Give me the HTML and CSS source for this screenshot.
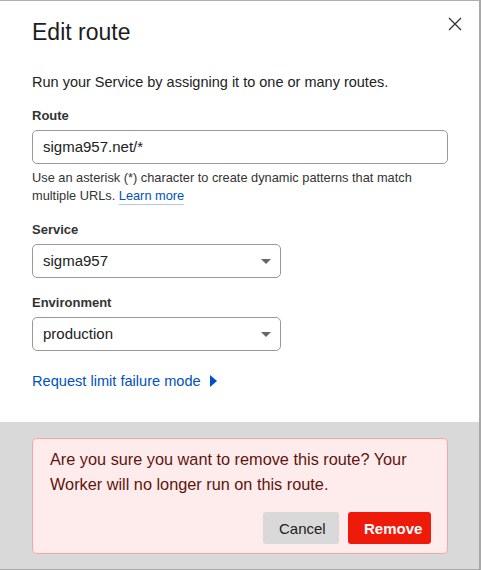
FILE: index.html
```html
<!DOCTYPE html>
<html>
<head>
<meta charset="utf-8">
<link rel="stylesheet" href="styles.css">
</head>
<body>
<div class="modal">
  <div class="content">
    <div class="header">
      <h1 class="title">Edit route</h1>
      <button class="close" aria-label="Close">
        <svg width="14" height="14" viewBox="0 0 14 14"><path d="M1 1L13 13M13 1L1 13" stroke="#333" stroke-width="1.3" fill="none"/></svg>
      </button>
    </div>
    <p class="intro">Run your Service by assigning it to one or many routes.</p>

    <div class="field">
      <label class="label">Route</label>
      <div class="input wide">sigma957.net/*</div>
      <p class="help">Use an asterisk (*) character to create dynamic patterns that match multiple URLs. <a class="learn">Learn more</a></p>
    </div>

    <div class="field">
      <label class="label">Service</label>
      <div class="input select">sigma957<span class="caret"></span></div>
    </div>

    <div class="field">
      <label class="label">Environment</label>
      <div class="input select">production<span class="caret"></span></div>
    </div>

    <a class="toggle">Request limit failure mode <span class="tri"></span></a>
  </div>

  <div class="footer">
    <div class="confirm">
      <p class="confirm-text">Are you sure you want to remove this route? Your Worker will no longer run on this route.</p>
      <div class="actions">
        <button class="btn cancel">Cancel</button>
        <button class="btn remove">Remove</button>
      </div>
    </div>
  </div>
</div>
</body>
</html>
```

FILE: styles.css
```css
* { box-sizing: border-box; }
html, body { margin: 0; padding: 0; background: #fff; }
body { font-family: "Liberation Sans", Arial, sans-serif; color: #222; }

.modal {
  width: 481px;
  height: 570px;
  border-top: 1px solid #b0b0b0;
  border-right: 2px solid #a8a8a8;
  border-bottom: 1px solid #a8a8a8;
  display: flex;
  flex-direction: column;
}

.content {
  flex: 1;
  padding: 15px 17px 0 32px;
}

.header {
  display: flex;
  justify-content: space-between;
  align-items: flex-start;
}

.title {
  margin: 0;
  font-size: 23px;
  font-weight: 400;
  line-height: 32px;
  color: #1d1d1d;
}

.close {
  border: 0;
  background: none;
  padding: 0;
  margin-top: 1px;
  width: 14px;
  height: 14px;
  display: block;
}
.close svg { display: block; }

.intro {
  margin: 24px 0 0;
  font-size: 14.5px;
  line-height: 20px;
  color: #222;
}

.field { margin-top: 16px; }
.field + .field { margin-top: 17px; }

.label {
  display: block;
  font-size: 13px;
  font-weight: 700;
  line-height: 16px;
  color: #333;
  margin-bottom: 6px;
}

.input {
  height: 34px;
  border: 1px solid #999;
  border-radius: 5px;
  font-size: 15px;
  line-height: 32px;
  padding: 0 10px;
  color: #222;
  position: relative;
}
.wide { width: 416px; }
.select { width: 249px; }

.caret {
  position: absolute;
  right: 9px;
  top: 14px;
  width: 0;
  height: 0;
  border-left: 5px solid transparent;
  border-right: 5px solid transparent;
  border-top: 5px solid #666;
}

.help {
  margin: 5px 0 0;
  font-size: 12.8px;
  line-height: 18px;
  color: #333;
  width: 410px;
}

.learn {
  display: inline-block;
  line-height: 17px;
  color: #0051c3;
  border-bottom: 1px solid #b8c6ee;
}

.toggle {
  display: inline-flex;
  align-items: center;
  margin-top: 20px;
  font-size: 14.6px;
  line-height: 20px;
  color: #0051c3;
}

.tri {
  display: inline-block;
  margin-left: 9px;
  width: 0;
  height: 0;
  border-top: 6px solid transparent;
  border-bottom: 6px solid transparent;
  border-left: 7px solid #0051c3;
}

.footer {
  background: #d9d9d9;
  padding: 16px 31px 16px 32px;
  height: 147px;
}

.confirm {
  background: #feecec;
  border: 1px solid #f6a6a2;
  border-radius: 5px;
  padding: 8px 16px 8px 17px;
  height: 116px;
}

.confirm-text {
  margin: 0;
  font-size: 16.3px;
  line-height: 25px;
  color: #5f1410;
}

.actions {
  display: flex;
  justify-content: flex-end;
  gap: 9px;
  margin-top: 15px;
}

.btn {
  border: 0;
  border-radius: 3px;
  height: 32px;
  font-family: "Liberation Sans", Arial, sans-serif;
  font-size: 15px;
  padding: 0 16px;
}
.cancel { background: #d9d9d9; color: #222; width: 76px; }
.remove { background: #ee1b0b; color: #fff; font-weight: 700; width: 83px; }
```
